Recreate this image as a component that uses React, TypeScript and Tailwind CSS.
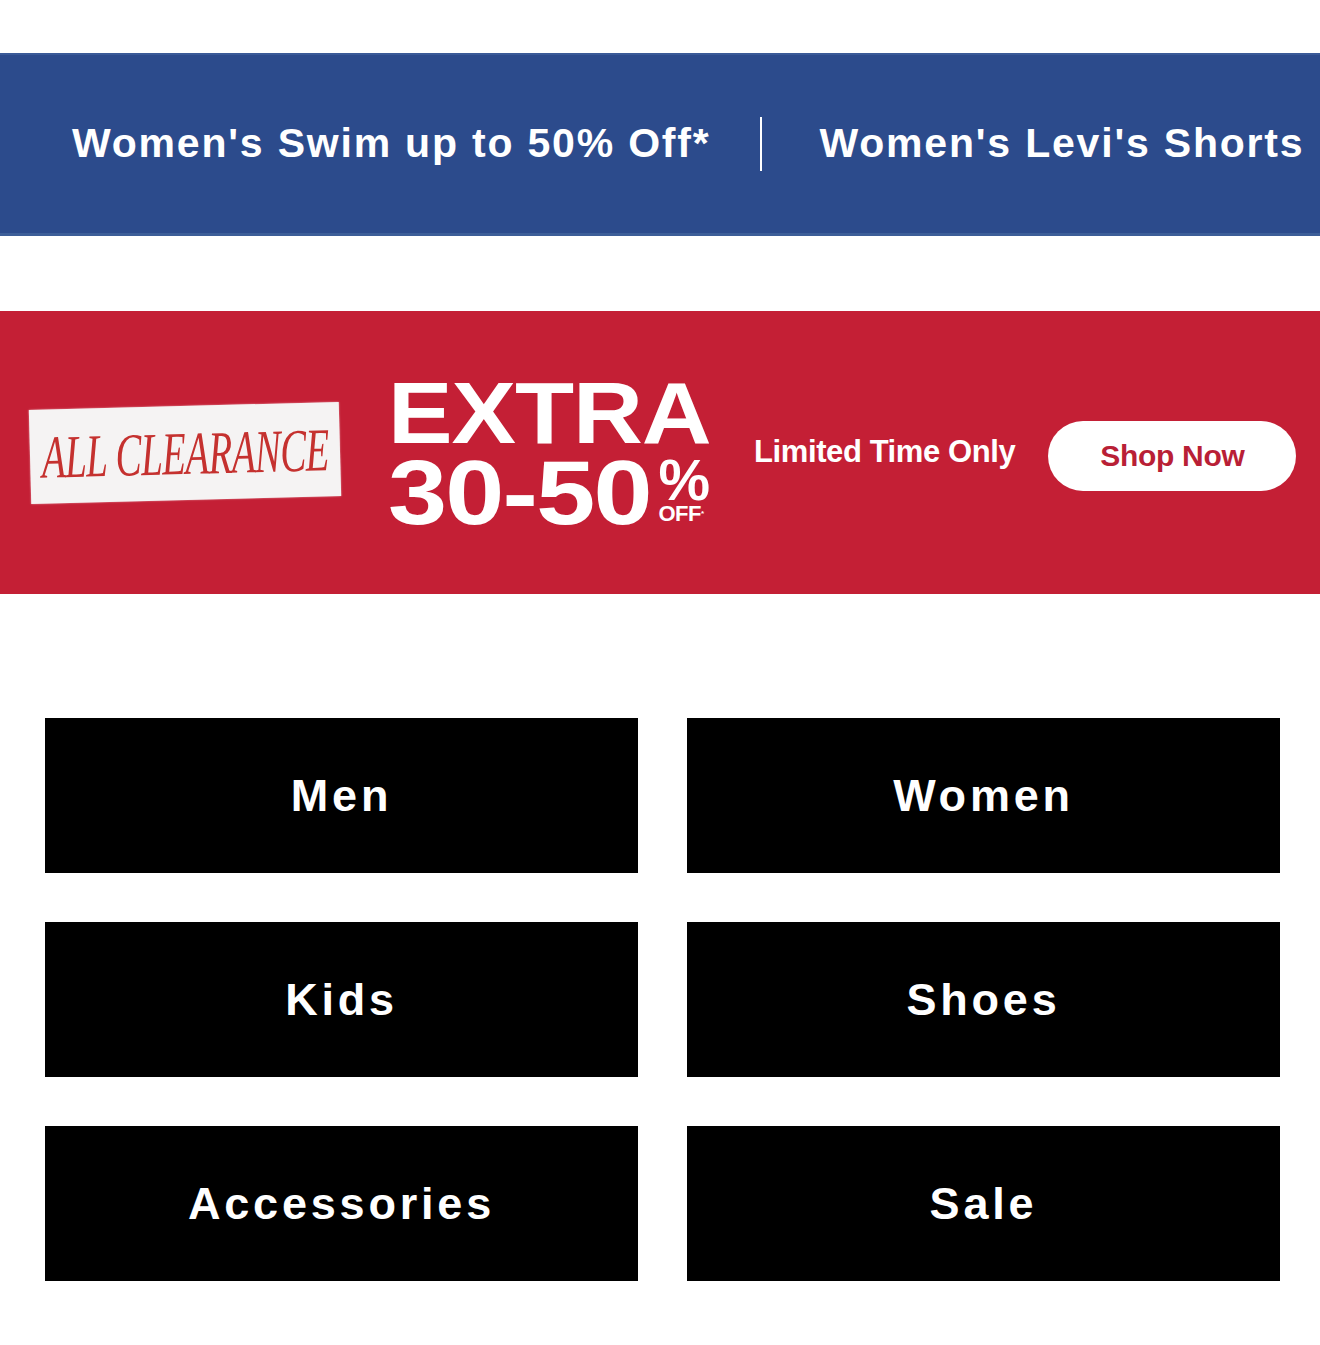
import React from "react";

const cats = ["Men", "Women", "Kids", "Shoes", "Accessories", "Sale"];

export default function App() {
  return (
    <div className="w-[1320px] min-h-[1345px] bg-white overflow-hidden" style={{ fontFamily: '"Liberation Sans", Arial, sans-serif' }}>
      <div className="pt-[53px]">
        <div className="h-[183px] bg-[#2c4b8c] border-t-2 border-t-[#3a5a98] border-b-[3px] border-b-[#3d5e98] flex items-center whitespace-nowrap overflow-hidden text-white font-bold text-[41px] tracking-[1.8px] pl-[72px]">
          <span>Women's Swim up to 50% Off*</span>
          <span className="w-[2px] h-[54px] bg-white ml-[49px] mr-[58px] shrink-0"></span>
          <span>Women's Levi's Shorts</span>
        </div>
      </div>

      <div className="mt-[75px] h-[283px] bg-[#c41f35] flex items-center pl-[30px]">
        <div className="w-[310px] h-[94px] bg-[#f5f3f3] -rotate-[1.5deg] flex items-center justify-center shrink-0 shadow-[0_0_2px_rgba(255,255,255,0.6)]">
          <span
            className="inline-block italic text-[61px] leading-none text-[#c5312f] scale-x-[0.64] whitespace-nowrap tracking-[-1px]"
            style={{ fontFamily: '"Liberation Serif", "Times New Roman", serif' }}
          >
            ALL CLEARANCE
          </span>
        </div>

        <div className="ml-[48px] w-[322px] shrink-0 flex flex-col text-white font-bold">
          <div className="h-[80px] leading-[80px] text-[88px]">
            <span className="inline-block origin-left scale-x-[1.1] tracking-[-1px]">EXTRA</span>
          </div>
          <div className="h-[80px] flex items-start">
            <div className="w-[271px] h-[80px] leading-[80px] text-[90px]">
              <span className="inline-block origin-left scale-x-[1.18] tracking-[-1.5px]">30-50</span>
            </div>
            <div className="flex flex-col items-start pt-[3px]">
              <span className="text-[58px] leading-[48px]">%</span>
              <span className="text-[22px] leading-[20px] tracking-[-0.5px]">
                OFF<span className="text-[8px] align-top">*</span>
              </span>
            </div>
          </div>
        </div>

        <div className="ml-[44px] text-white font-bold text-[31px] tracking-[-0.4px] whitespace-nowrap">
          Limited Time Only
        </div>

        <div className="ml-[33px] w-[248px] h-[70px] rounded-full bg-white flex items-center justify-center shrink-0 mt-[6px]">
          <span className="text-[#b91f36] font-bold text-[30px] tracking-[-0.3px]">Shop Now</span>
        </div>
      </div>

      <div className="mt-[124px] pl-[45px] pr-[40px] grid grid-cols-2 gap-x-[49px] gap-y-[49px]">
        {cats.map((c) => (
          <div key={c} className="h-[155px] bg-black flex items-center justify-center">
            <span className="text-white font-bold text-[45px] tracking-[3.8px]">{c}</span>
          </div>
        ))}
      </div>
    </div>
  );
}
